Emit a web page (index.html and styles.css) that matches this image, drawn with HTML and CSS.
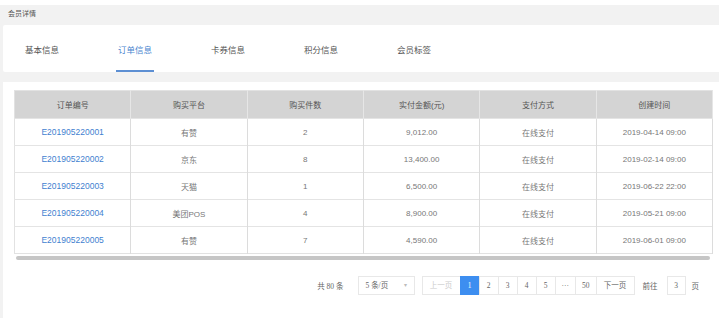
FILE: index.html
```html
<!DOCTYPE html>
<html lang="zh">
<head>
  <meta charset="UTF-8">
  <title>会员详情</title>
  <link rel="stylesheet" href="styles.css">
</head>
<body>
  <div class="page">
    <div class="page-title">会员详情</div>

    <div class="tabs">
      <div class="tab">基本信息</div>
      <div class="tab active">订单信息</div>
      <div class="tab">卡券信息</div>
      <div class="tab">积分信息</div>
      <div class="tab">会员标签</div>
    </div>

    <div class="content">
      <table class="orders">
        <thead>
          <tr>
            <th>订单编号</th>
            <th>购买平台</th>
            <th>购买件数</th>
            <th>实付金额(元)</th>
            <th>支付方式</th>
            <th>创建时间</th>
          </tr>
        </thead>
        <tbody>
          <tr>
            <td><a href="#">E201905220001</a></td>
            <td>有赞</td>
            <td>2</td>
            <td>9,012.00</td>
            <td>在线支付</td>
            <td>2019-04-14 09:00</td>
          </tr>
          <tr>
            <td><a href="#">E201905220002</a></td>
            <td>京东</td>
            <td>8</td>
            <td>13,400.00</td>
            <td>在线支付</td>
            <td>2019-02-14 09:00</td>
          </tr>
          <tr>
            <td><a href="#">E201905220003</a></td>
            <td>天猫</td>
            <td>1</td>
            <td>6,500.00</td>
            <td>在线支付</td>
            <td>2019-06-22 22:00</td>
          </tr>
          <tr>
            <td><a href="#">E201905220004</a></td>
            <td>美团POS</td>
            <td>4</td>
            <td>8,900.00</td>
            <td>在线支付</td>
            <td>2019-05-21 09:00</td>
          </tr>
          <tr>
            <td><a href="#">E201905220005</a></td>
            <td>有赞</td>
            <td>7</td>
            <td>4,590.00</td>
            <td>在线支付</td>
            <td>2019-06-01 09:00</td>
          </tr>
        </tbody>
      </table>
      <div class="scrollbar"></div>

      <div class="pager">
        <span class="total">共 80 条</span>
        <div class="size-select">5 条/页 <span class="caret">▾</span></div>
        <div class="pages">
          <span class="btn disabled wide">上一页</span>
          <span class="btn active">1</span>
          <span class="btn">2</span>
          <span class="btn">3</span>
          <span class="btn">4</span>
          <span class="btn">5</span>
          <span class="btn">···</span>
          <span class="btn">50</span>
          <span class="btn wide">下一页</span>
        </div>
        <span class="jump">前往</span>
        <span class="jump-input">3</span>
        <span class="jump-unit">页</span>
      </div>
    </div>
  </div>
</body>
</html>
```

FILE: styles.css
```css
* { box-sizing: border-box; }
body {
  margin: 0;
  background: #fff;
  font-family: "Liberation Sans", "Noto Sans CJK SC", sans-serif;
  color: #666;
}

.page {
  margin-top: 5px;
  background: #f2f2f2;
  padding: 0 0 0 3px;
  min-height: 313px;
}

.page-title {
  height: 20px;
  line-height: 18px;
  padding-left: 5px;
  font-size: 7px;
  color: #555;
}

.tabs {
  display: flex;
  gap: 55px;
  background: #fff;
  height: 47px;
  padding-left: 20px;
  border-radius: 2px 0 0 2px;
}

.tab {
  padding: 19px 2px 0;
  height: 47px;
  font-size: 8.5px;
  line-height: 12px;
  color: #555;
  border-bottom: 2px solid transparent;
}

.tab.active {
  color: #4a86cf;
  border-bottom-color: #5d8fd3;
}

.content {
  margin-top: 10px;
  background: #fff;
  padding: 8px 6px 20px 11px;
  min-height: 236px;
}

.orders {
  width: 699px;
  border-collapse: collapse;
  table-layout: fixed;
  font-size: 8px;
  border: 1px solid #e2e2e2;
}

.orders th {
  height: 28px;
  background: #d4d4d4;
  color: #555;
  font-weight: normal;
  border-right: 1px solid #e6e6e6;
}

.orders td {
  height: 27px;
  text-align: center;
  color: #777;
  border-top: 1px solid #e4e4e4;
  border-right: 1px solid #dcdcdc;
}

.orders a {
  color: #3f7fd0;
  text-decoration: none;
  font-size: 8.5px;
}

.scrollbar {
  width: 694px;
  height: 4px;
  margin: 2px 0 0 2px;
  background: #c6c6c6;
  border-radius: 2px;
}

.pager {
  display: flex;
  align-items: center;
  justify-content: flex-end;
  margin-top: 16px;
  padding-right: 14px;
  font-family: "Liberation Serif", "Noto Sans CJK SC", serif;
  font-size: 7.5px;
  color: #666;
}

.total { margin-right: 14px; }

.size-select {
  width: 57px;
  height: 19px;
  line-height: 17px;
  border: 1px solid #e8e8e8;
  padding-left: 7px;
  margin-right: 8px;
  position: relative;
}

.caret {
  position: absolute;
  right: 7px;
  top: 0;
  color: #bbb;
  font-size: 6px;
}

.pages { display: flex; }

.btn {
  min-width: 20px;
  height: 19px;
  line-height: 17px;
  padding: 0 6px;
  text-align: center;
  border: 1px solid #e8e8e8;
  margin-left: -1px;
}

.btn.wide { width: 39px; }
.btn.disabled { color: #ccc; }

.btn.active {
  background: #3d8ef0;
  border-color: #3d8ef0;
  color: #fff;
}

.jump { margin-left: 8px; }

.jump-input {
  width: 19px;
  height: 19px;
  line-height: 17px;
  text-align: center;
  border: 1px solid #e8e8e8;
  margin: 0 6px 0 9px;
}
```
